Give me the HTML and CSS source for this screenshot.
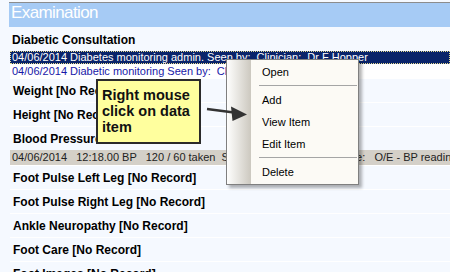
FILE: index.html
```html
<!DOCTYPE html>
<html>
<head>
<meta charset="utf-8">
<link rel="stylesheet" href="styles.css">
</head>
<body>
<div class="panel">
  <div class="header">Examination</div>
  <div class="group">
    <div class="label first">Diabetic Consultation</div>
    <div class="data selected">04/06/2014 Diabetes monitoring admin. Seen by:  Clinician:  Dr F Hopper</div>
    <div class="data link">04/06/2014 Diabetic monitoring Seen by:  Clinician:  Dr F Hopper</div>
  </div>
  <div class="group"><div class="label">Weight [No Record]</div></div>
  <div class="group"><div class="label">Height [No Record]</div></div>
  <div class="group">
    <div class="label">Blood Pressure</div>
    <div class="data bp">04/06/2014   12:18.00 BP   120 / 60 taken  Seen by:  Dr F Hopper    due:   O/E - BP reading</div>
  </div>
  <div class="group"><div class="label">Foot Pulse Left Leg [No Record]</div></div>
  <div class="group"><div class="label">Foot Pulse Right Leg [No Record]</div></div>
  <div class="group"><div class="label">Ankle Neuropathy [No Record]</div></div>
  <div class="group"><div class="label">Foot Care [No Record]</div></div>
  <div class="group"><div class="label">Foot Images [No Record]</div></div>
</div>

<div class="callout">Right mouse<br>click on data<br>item</div>

<div class="menu">
  <div class="gutter"></div>
  <div class="items">
    <div class="item">Open</div>
    <div class="sep"></div>
    <div class="item">Add</div>
    <div class="item">View Item</div>
    <div class="item">Edit Item</div>
    <div class="sep"></div>
    <div class="item">Delete</div>
  </div>
</div>

<svg class="arrow" width="50" height="26" viewBox="0 0 50 26">
  <line x1="7" y1="9" x2="34" y2="12.6" stroke="#333" stroke-width="2.5"/>
  <polygon points="31,6.5 47,14.5 32.5,21" fill="#333"/>
</svg>
</body>
</html>
```

FILE: styles.css
```css
html, body {
  margin: 0;
  padding: 0;
}
body {
  width: 450px;
  height: 272px;
  overflow: hidden;
  position: relative;
  background: #F5F9FF;
  font-family: "Liberation Sans", Arial, sans-serif;
}
.panel {
  margin-left: 9px;
  padding-top: 2px;
}
.header {
  border-top: 1px solid #8C8C8C;
  background: #A6CBF5;
  height: 24px;
  color: #ffffff;
  font-size: 17px;
  letter-spacing: -0.6px;
  line-height: 19px;
  padding-left: 2px;
}
.group {
  margin-left: 1px;
  border-bottom: 1px solid #ffffff;
}
.label {
  height: 23px;
  box-sizing: border-box;
  padding: 4px 0 0 3px;
  font-weight: bold;
  font-size: 12px;
  line-height: 16px;
  color: #000;
  white-space: nowrap;
  overflow: hidden;
}
.label.first {
  height: 24px;
  padding-top: 5px;
  padding-left: 2px;
}
.data {
  font-size: 11px;
  white-space: pre;
  overflow: hidden;
  padding-left: 2px;
}
.selected {
  background: #0A246A;
  color: #ffffff;
  border: 1px dotted #E8DC90;
  line-height: 11px;
  padding-left: 1px;
}
.link {
  background: #ffffff;
  color: #1818A8;
  line-height: 14px;
}
.bp {
  background: #D4D0C8;
  color: #222;
  line-height: 15px;
}
.callout {
  position: absolute;
  left: 96px;
  top: 79px;
  width: 105px;
  height: 65px;
  box-sizing: border-box;
  border: 2px solid #2A2A2A;
  background: #FFFF9E;
  padding: 6px 0 0 4px;
  font-weight: bold;
  font-size: 14.5px;
  line-height: 16px;
  color: #111;
  white-space: nowrap;
}
.arrow {
  position: absolute;
  left: 200px;
  top: 100px;
  z-index: 2;
}
.menu {
  position: absolute;
  left: 226px;
  top: 59px;
  width: 131px;
  border: 1px solid #7F7F7F;
  background: #FCFAF5;
  display: flex;
  box-shadow: 3px 3px 3px rgba(0, 0, 0, 0.3);
  z-index: 1;
}
.gutter {
  width: 24px;
  background: linear-gradient(to right, #FEFEFD, #CCC8BF);
}
.items {
  flex: 1;
  padding: 1px 0;
}
.item {
  height: 22px;
  line-height: 22px;
  padding-left: 11px;
  font-size: 11px;
  color: #000;
}
.sep {
  height: 1px;
  background: #A5A5A5;
  margin: 2px 1px 3px 8px;
}
```
